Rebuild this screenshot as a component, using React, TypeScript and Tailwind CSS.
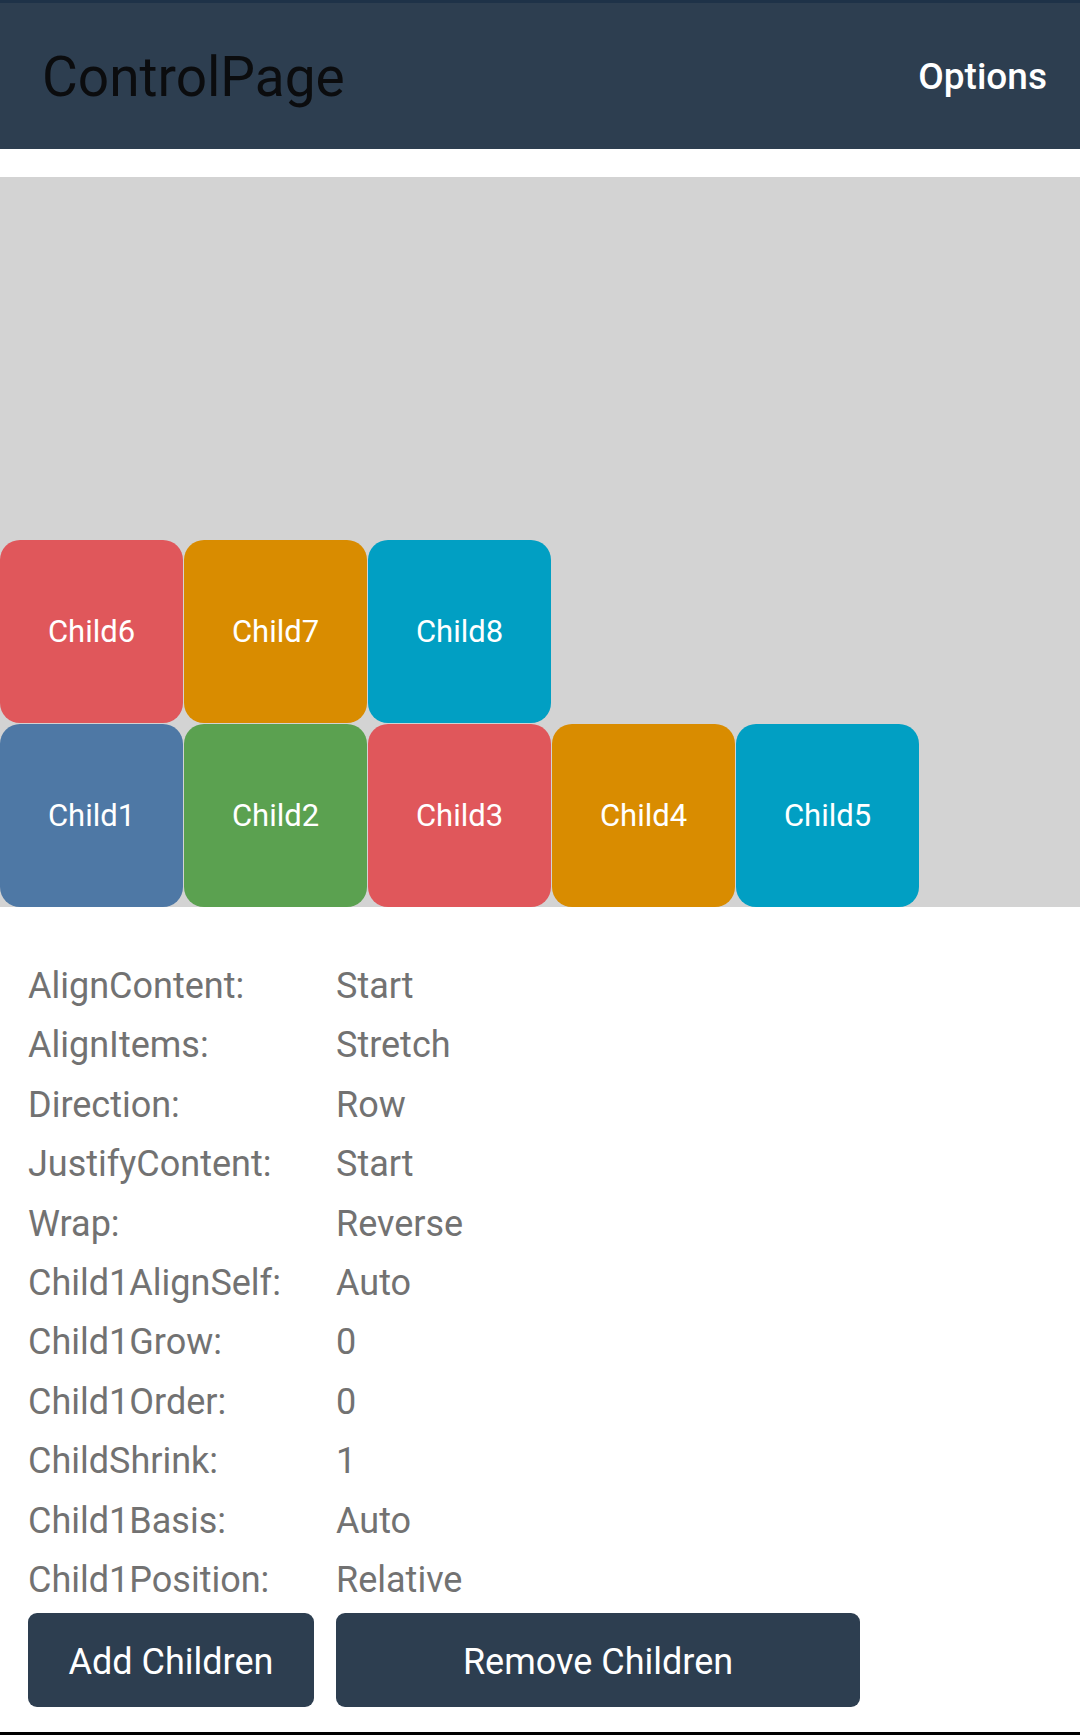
import React from 'react';

const children = [
  { name: 'Child1', color: 'bg-[#4e78a5]' },
  { name: 'Child2', color: 'bg-[#5ba150]' },
  { name: 'Child3', color: 'bg-[#e0575b]' },
  { name: 'Child4', color: 'bg-[#d98c00]' },
  { name: 'Child5', color: 'bg-[#019fc3]' },
  { name: 'Child6', color: 'bg-[#e0575b]' },
  { name: 'Child7', color: 'bg-[#d98c00]' },
  { name: 'Child8', color: 'bg-[#019fc3]' },
];

const props: [string, string][] = [
  ['AlignContent:', 'Start'],
  ['AlignItems:', 'Stretch'],
  ['Direction:', 'Row'],
  ['JustifyContent:', 'Start'],
  ['Wrap:', 'Reverse'],
  ['Child1AlignSelf:', 'Auto'],
  ['Child1Grow:', '0'],
  ['Child1Order:', '0'],
  ['ChildShrink:', '1'],
  ['Child1Basis:', 'Auto'],
  ['Child1Position:', 'Relative'],
];

export default function App() {
  return (
    <div className="w-[1080px] h-[1735px] bg-white flex flex-col font-['Roboto',sans-serif]">
      {/* Header */}
      <div className="h-[3px] bg-[#1e3248]" />
      <div className="h-[146px] bg-[#2d3e50] flex items-center justify-between pl-[42px] pr-[33px]">
        <div className="text-[55px] text-[#0b0c0e] leading-none pt-[3px]">ControlPage</div>
        <div className="text-[37px] font-medium text-white leading-none">Options</div>
      </div>

      {/* Flex playground */}
      <div className="mt-[28px] h-[730px] bg-[#d3d3d3] flex flex-wrap-reverse content-start">
        {children.map((c) => (
          <div
            key={c.name}
            className={`${c.color} w-[183px] h-[183px] mr-px mt-px rounded-[20px] flex items-center justify-center text-white text-[31px] pt-[2px]`}
          >
            {c.name}
          </div>
        ))}
      </div>

      {/* Properties */}
      <div className="pt-[50px] px-[28px] grid grid-cols-[308px_1fr] text-[36px] leading-[59.4px] text-[#727272]">
        {props.map(([k, v]) => (
          <React.Fragment key={k}>
            <div>{k}</div>
            <div>{v}</div>
          </React.Fragment>
        ))}
      </div>

      {/* Buttons */}
      <div className="mt-[3px] px-[28px] flex gap-[22px]">
        <button className="w-[286px] h-[94px] rounded-[9px] bg-[#2d3e50] text-white text-[36px] pt-[3px]">
          Add Children
        </button>
        <button className="w-[524px] h-[94px] rounded-[9px] bg-[#2d3e50] text-white text-[36px] pt-[3px]">
          Remove Children
        </button>
      </div>

      <div className="flex-1" />
      <div className="h-[3px] bg-black" />
    </div>
  );
}
